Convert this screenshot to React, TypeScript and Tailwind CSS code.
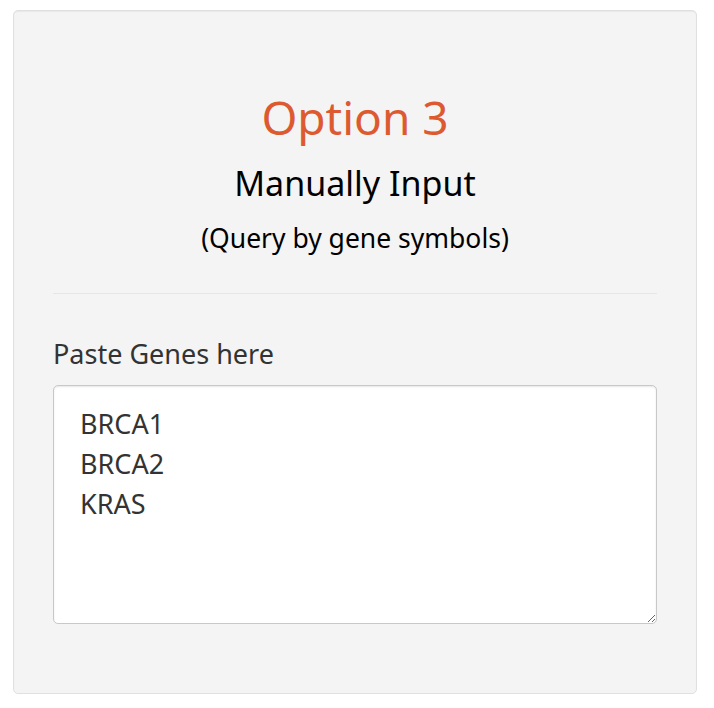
const App = () => {
  return (
    <div className="min-h-screen bg-white pt-[10px] pl-[13px]" style={{ fontFamily: '"Noto Sans", "Open Sans", sans-serif' }}>
      <div className="flex h-[684px] w-[684px] flex-col rounded-[5px] border border-[#e0e0e0] bg-[#f4f4f4] px-[39px] pt-[80px] shadow-[inset_0_1px_1px_rgba(0,0,0,0.05)]">
        <h1 className="text-center text-[46px] leading-[52px] text-[#dd5a30]">Option 3</h1>
        <h3 className="mt-[20px] text-center text-[34px] leading-[40px] text-black">Manually Input</h3>
        <p className="mt-[19px] text-center text-[26.5px] leading-[32px] text-black">(Query by gene symbols)</p>
        <hr className="mt-[39px] border-t border-[#e6e6e6]" />
        <label className="mt-[44px] block text-[27px] leading-[32px] text-[#333]">Paste Genes here</label>
        <textarea
          className="mt-[15px] h-[239px] w-full resize-y rounded-[5px] border border-[#c8c8c8] bg-white px-[26px] py-[18px] text-[27px] leading-[40px] text-[#333] shadow-[inset_0_1px_2px_rgba(0,0,0,0.1)] outline-none"
          defaultValue={'BRCA1\nBRCA2\nKRAS'}
        />
      </div>
    </div>
  );
};

export default App;
